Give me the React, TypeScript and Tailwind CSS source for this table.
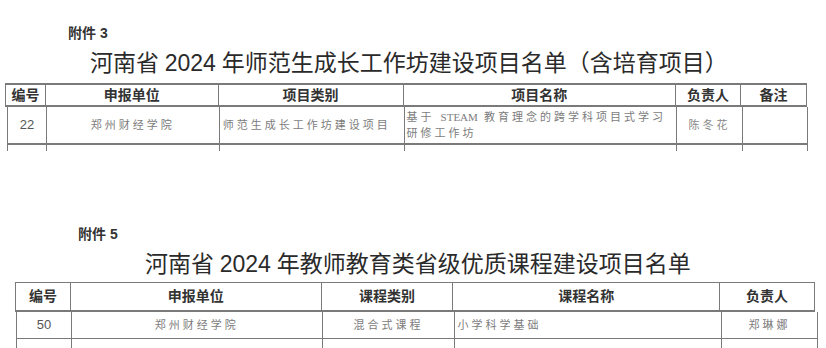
import React from 'react';

const cjk = "font-['Liberation_Sans','Noto_Sans_CJK_SC',sans-serif]";
const serif = "font-['Liberation_Serif','Noto_Sans_CJK_SC',serif]";

const Cell: React.FC<{ className?: string; children?: React.ReactNode }> = ({ className = '', children }) => (
  <div className={`flex items-center border-r border-[#7a7a7a] ${className}`}>{children}</div>
);

const Head: React.FC<{ className?: string; children?: React.ReactNode }> = ({ className = '', children }) => (
  <Cell className={`justify-center text-[14px] font-bold text-[#333] ${className}`}>{children}</Cell>
);

const Data: React.FC<{ className?: string; children?: React.ReactNode }> = ({ className = '', children }) => (
  <Cell className={`text-[11px] tracking-[3px] text-[#7c7c7c] ${className}`}>{children}</Cell>
);

export default function App() {
  return (
    <div className={`w-[826px] h-[348px] overflow-hidden bg-white ${cjk}`}>
      {/* 附件 3 */}
      <div className="h-[44px] pt-[25px] pl-[68px] text-[14px] leading-[16px] font-bold text-[#333]">附件 3</div>
      <div className={`h-[39px] pl-[90px] text-[23px] leading-[39px] text-[#2a2a2a] whitespace-nowrap ${serif}`}>
        河南省 <span className={cjk}>2024</span> 年师范生成长工作坊建设项目名单（含培育项目）
      </div>

      <div className="ml-[5px] flex h-[24px] w-[802px] border-t-2 border-l border-b-2 border-[#7a7a7a]">
        <Head className="w-[40px]">编号</Head>
        <Head className="w-[173px]">申报单位</Head>
        <Head className="w-[185px]">项目类别</Head>
        <Head className="w-[273px]">项目名称</Head>
        <Head className="w-[65px]">负责人</Head>
        <Head className="w-[66px]">备注</Head>
      </div>
      <div className="ml-[7px] flex h-[38px] w-[801px] border-l border-b-2 border-[#7a7a7a]">
        <Data className="w-[39px] justify-center text-[13px] tracking-normal text-[#555]">22</Data>
        <Data className="w-[173px] justify-center">郑州财经学院</Data>
        <Data className="w-[185px] pl-[3px]">师范生成长工作坊建设项目</Data>
        <Data className="w-[273px] pl-[2px] leading-[16px] tracking-[3px]">
          <div>
            <div className="whitespace-nowrap">基于 <span className={`${serif} tracking-[0px]`}>STEAM</span> 教育理念的跨学科项目式学习</div>
            <div>研修工作坊</div>
          </div>
        </Data>
        <Data className="w-[66px] justify-center text-[#888]">陈冬花</Data>
        <Data className="w-[65px]" />
      </div>
      <div className="ml-[7px] flex h-[6px] w-[801px] border-l border-[#7a7a7a]">
        <Cell className="w-[39px]" />
        <Cell className="w-[173px]" />
        <Cell className="w-[185px]" />
        <Cell className="w-[273px]" />
        <Cell className="w-[66px]" />
        <Cell className="w-[65px]" />
      </div>

      {/* 附件 5 */}
      <div className="h-[96px] pt-[75px] pl-[78px] text-[14px] leading-[16px] font-bold text-[#333]">附件 5</div>
      <div className={`h-[35px] pl-[145px] text-[23px] leading-[34px] text-[#2a2a2a] whitespace-nowrap ${serif}`}>
        河南省 <span className={cjk}>2024</span> 年教师教育类省级优质课程建设项目名单
      </div>

      <div className="ml-[15px] flex h-[30px] w-[800px] border-t border-l border-b-2 border-[#7a7a7a]">
        <Head className="w-[55px]">编号</Head>
        <Head className="w-[251px]">申报单位</Head>
        <Head className="w-[132px]">课程类别</Head>
        <Head className="w-[267px]">课程名称</Head>
        <Head className="w-[95px]">负责人</Head>
      </div>
      <div className="ml-[16px] flex h-[27px] w-[802px] border-l border-b border-[#7a7a7a]">
        <Data className="w-[55px] justify-center text-[13px] tracking-normal text-[#555]">50</Data>
        <Data className="w-[251px] justify-center">郑州财经学院</Data>
        <Data className="w-[133px] justify-center">混合式课程</Data>
        <Data className="w-[267px] pl-[2px]">小学科学基础</Data>
        <Data className="w-[96px] justify-center">郑琳娜</Data>
      </div>
      <div className="ml-[16px] flex h-[10px] w-[802px] border-l border-[#7a7a7a]">
        <Cell className="w-[55px]" />
        <Cell className="w-[251px]" />
        <Cell className="w-[133px]" />
        <Cell className="w-[267px]" />
        <Cell className="w-[96px]" />
      </div>
    </div>
  );
}
